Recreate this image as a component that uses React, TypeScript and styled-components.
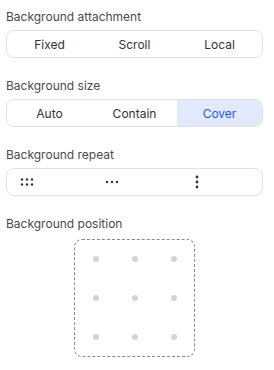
import styled, { createGlobalStyle } from "styled-components";

const GlobalStyle = createGlobalStyle`
  body {
    margin: 0;
    background: #ffffff;
    font-family: Inter, "Liberation Sans", sans-serif;
  }
`;

const Panel = styled.div`
  width: 257px;
  padding: 9px 0 0 6px;
  display: flex;
  flex-direction: column;
  gap: 20px;
`;

const Section = styled.div`
  display: flex;
  flex-direction: column;
  gap: 5px;
`;

const Label = styled.div`
  font-size: 12px;
  line-height: 16px;
  color: #4a4a4a;
`;

const Segmented = styled.div`
  display: grid;
  grid-template-columns: repeat(3, 1fr);
  height: 28px;
  border: 1px solid #e2e2e2;
  border-radius: 8px;
  overflow: hidden;
  box-sizing: border-box;
`;

const Segment = styled.button<{ $active?: boolean }>`
  border: none;
  margin: 0;
  padding: 0;
  display: flex;
  align-items: center;
  justify-content: center;
  font-family: inherit;
  font-size: 12px;
  color: ${({ $active }) => ($active ? "#1f5bd8" : "#333333")};
  background: ${({ $active }) => ($active ? "#e3e9fd" : "transparent")};
  cursor: pointer;
`;

const IconSegment = styled(Segment)`
  padding-right: 45px;
`;

const PositionRow = styled.div`
  display: flex;
  justify-content: center;
  padding-top: 2px;
`;

const PositionBox = styled.div`
  width: 121px;
  height: 118px;
  box-sizing: border-box;
  border: 1px dashed #8a8a8a;
  border-radius: 8px;
  display: grid;
  grid-template-columns: repeat(3, 1fr);
  grid-template-rows: repeat(3, 1fr);
  padding: 0 1px;
`;

const Spot = styled.div`
  display: flex;
  align-items: center;
  justify-content: center;
  &::after {
    content: "";
    width: 6px;
    height: 6px;
    border-radius: 50%;
    background: #d3d3d3;
  }
`;

function RepeatIcon() {
  return (
    <svg width="14" height="8" viewBox="0 0 14 8">
      {[0, 1].map((r) =>
        [0, 1, 2].map((c) => (
          <circle key={`${r}-${c}`} cx={2 + c * 5} cy={1.5 + r * 5} r="1.2" fill="#333" />
        ))
      )}
    </svg>
  );
}

function RepeatXIcon() {
  return (
    <svg width="14" height="4" viewBox="0 0 14 4">
      {[0, 1, 2].map((c) => (
        <circle key={c} cx={2 + c * 5} cy={2} r="1.2" fill="#333" />
      ))}
    </svg>
  );
}

function RepeatYIcon() {
  return (
    <svg width="4" height="14" viewBox="0 0 4 14">
      {[0, 1, 2].map((r) => (
        <circle key={r} cx={2} cy={2 + r * 5} r="1.4" fill="#333" />
      ))}
    </svg>
  );
}

function App() {
  return (
    <>
      <GlobalStyle />
      <Panel>
        <Section>
          <Label>Background attachment</Label>
          <Segmented>
            <Segment>Fixed</Segment>
            <Segment>Scroll</Segment>
            <Segment>Local</Segment>
          </Segmented>
        </Section>
        <Section>
          <Label>Background size</Label>
          <Segmented>
            <Segment>Auto</Segment>
            <Segment>Contain</Segment>
            <Segment $active>Cover</Segment>
          </Segmented>
        </Section>
        <Section>
          <Label>Background repeat</Label>
          <Segmented>
            <IconSegment>
              <RepeatIcon />
            </IconSegment>
            <IconSegment>
              <RepeatXIcon />
            </IconSegment>
            <IconSegment>
              <RepeatYIcon />
            </IconSegment>
          </Segmented>
        </Section>
        <Section>
          <Label>Background position</Label>
          <PositionRow>
            <PositionBox>
              {Array.from({ length: 9 }).map((_, i) => (
                <Spot key={i} />
              ))}
            </PositionBox>
          </PositionRow>
        </Section>
      </Panel>
    </>
  );
}

export default App;
